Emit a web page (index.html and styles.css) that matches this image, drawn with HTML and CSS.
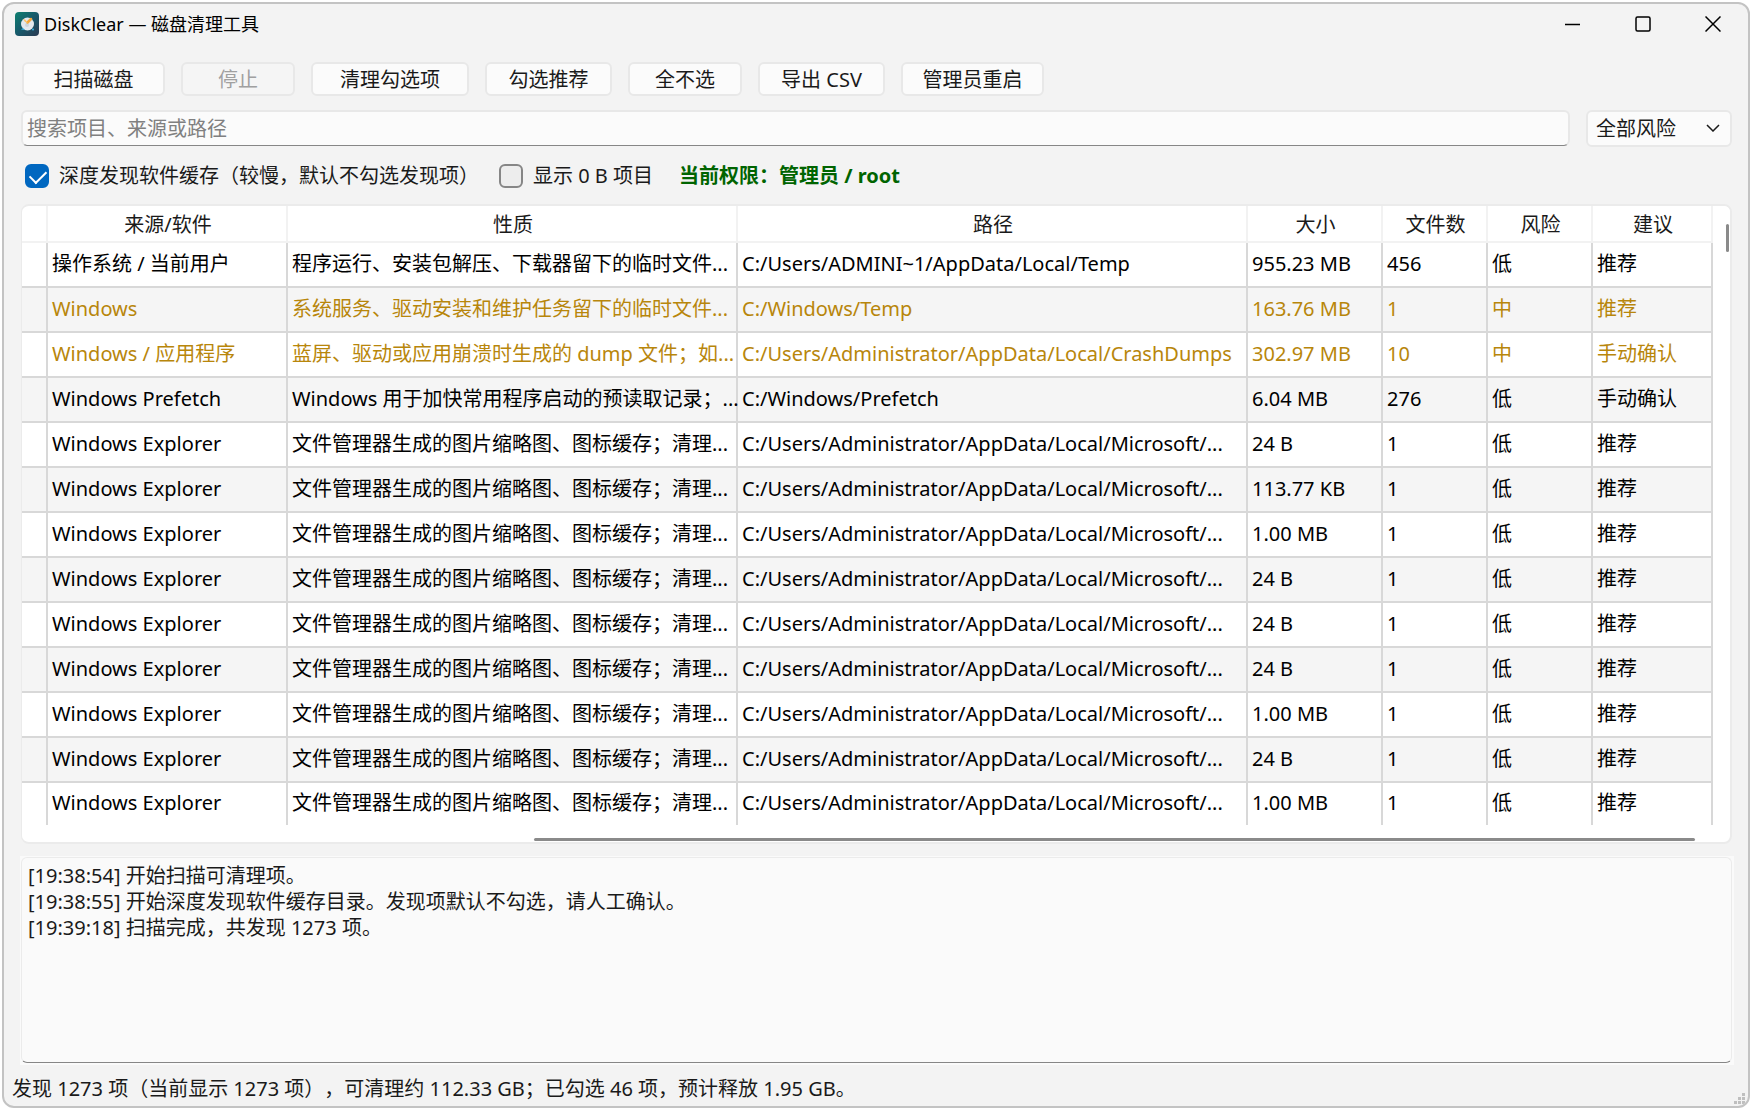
FILE: index.html
```html
<!DOCTYPE html>
<html lang="zh-CN">
<head>
  <meta charset="UTF-8" />
  <meta name="viewport" content="width=device-width, initial-scale=1" />
  <title>DiskClear — 磁盘清理工具</title>
  <link rel="stylesheet" href="styles.css">
</head>
<body>
  <div class="window">
    <div class="titlebar">
      <svg class="app-icon" viewBox="0 0 24 24" aria-hidden="true">
        <defs>
          <linearGradient id="iconBg" x1="0" y1="0" x2="1" y2="1">
            <stop offset="0" stop-color="#0d8070" />
            <stop offset="0.5" stop-color="#17596b" />
            <stop offset="1" stop-color="#2b3850" />
          </linearGradient>
        </defs>
        <rect width="24" height="24" rx="4" fill="url(#iconBg)" />
        <circle cx="12.500" cy="12" r="6.500" fill="#e3e8ee" />
        <circle cx="12" cy="13" r="2" fill="#cbd5df" />
        <path d="M16 7L12.500 10.500" stroke="#f5a83c" stroke-width="2.500" stroke-linecap="round" />
        <path d="M8 7L10 10L13 11L10 7.500Z" fill="#fbc46c" />
        <path d="M6 17.500L8 16L10 18Z" fill="#39b6e8" />
        <circle cx="18" cy="17.500" r="1" fill="#39b6e8" />
      </svg>
      <h1>DiskClear — 磁盘清理工具</h1>
      <div class="window-controls">
        <button type="button" aria-label="最小化">
          <svg viewBox="0 0 16 16"><path d="M0 8.500H15" /></svg>
        </button>
        <button type="button" aria-label="最大化">
          <svg viewBox="0 0 16 16"><rect x="1" y="1" width="14" height="14" rx="1.500" /></svg>
        </button>
        <button type="button" aria-label="关闭">
          <svg viewBox="0 0 16 16"><path d="M0.500 0.500L15.500 15.500M15.500 0.500L0.500 15.500" /></svg>
        </button>
      </div>
    </div>

    <main class="content">
      <div class="toolbar">
        <button type="button" class="btn btn-lg">扫描磁盘</button>
        <button type="button" class="btn" disabled>停止</button>
        <button type="button" class="btn btn-xl">清理勾选项</button>
        <button type="button" class="btn btn-md">勾选推荐</button>
        <button type="button" class="btn">全不选</button>
        <button type="button" class="btn btn-md">导出 CSV</button>
        <button type="button" class="btn btn-lg">管理员重启</button>
      </div>

      <div class="filters">
        <input type="text" class="search" placeholder="搜索项目、来源或路径" aria-label="搜索" />
        <div class="risk-select">
          <select aria-label="风险">
            <option>全部风险</option>
            <option>低</option>
            <option>中</option>
          </select>
          <svg viewBox="0 0 14 8" aria-hidden="true"><path d="M1 1L7 7L13 1" /></svg>
        </div>
      </div>

      <div class="options">
        <label><input type="checkbox" checked />深度发现软件缓存（较慢，默认不勾选发现项）</label>
        <label><input type="checkbox" />显示 0 B 项目</label>
        <strong class="permission">当前权限：管理员 / root</strong>
      </div>

      <div class="table-wrap">
        <table>
          <colgroup>
            <col class="c-check"><col class="c-source"><col class="c-kind"><col class="c-path"><col class="c-size"><col class="c-small"><col class="c-small"><col class="c-advice"><col>
          </colgroup>
          <thead>
            <tr><th></th><th>来源/软件</th><th>性质</th><th>路径</th><th>大小</th><th>文件数</th><th>风险</th><th>建议</th><th class="rest"></th></tr>
          </thead>
          <tbody>
            <tr><td></td><td>操作系统 / 当前用户</td><td>程序运行、安装包解压、下载器留下的临时文件...</td><td>C:/Users/ADMINI~1/AppData/Local/Temp</td><td>955.23 MB</td><td>456</td><td>低</td><td>推荐</td><td class="rest"></td></tr>
            <tr class="medium"><td></td><td>Windows</td><td>系统服务、驱动安装和维护任务留下的临时文件...</td><td>C:/Windows/Temp</td><td>163.76 MB</td><td>1</td><td>中</td><td>推荐</td><td class="rest"></td></tr>
            <tr class="medium"><td></td><td>Windows / 应用程序</td><td>蓝屏、驱动或应用崩溃时生成的 dump 文件；如...</td><td>C:/Users/Administrator/AppData/Local/CrashDumps</td><td>302.97 MB</td><td>10</td><td>中</td><td>手动确认</td><td class="rest"></td></tr>
            <tr><td></td><td>Windows Prefetch</td><td>Windows 用于加快常用程序启动的预读取记录；...</td><td>C:/Windows/Prefetch</td><td>6.04 MB</td><td>276</td><td>低</td><td>手动确认</td><td class="rest"></td></tr>
            <tr><td></td><td>Windows Explorer</td><td>文件管理器生成的图片缩略图、图标缓存；清理...</td><td>C:/Users/Administrator/AppData/Local/Microsoft/...</td><td>24 B</td><td>1</td><td>低</td><td>推荐</td><td class="rest"></td></tr>
            <tr><td></td><td>Windows Explorer</td><td>文件管理器生成的图片缩略图、图标缓存；清理...</td><td>C:/Users/Administrator/AppData/Local/Microsoft/...</td><td>113.77 KB</td><td>1</td><td>低</td><td>推荐</td><td class="rest"></td></tr>
            <tr><td></td><td>Windows Explorer</td><td>文件管理器生成的图片缩略图、图标缓存；清理...</td><td>C:/Users/Administrator/AppData/Local/Microsoft/...</td><td>1.00 MB</td><td>1</td><td>低</td><td>推荐</td><td class="rest"></td></tr>
            <tr><td></td><td>Windows Explorer</td><td>文件管理器生成的图片缩略图、图标缓存；清理...</td><td>C:/Users/Administrator/AppData/Local/Microsoft/...</td><td>24 B</td><td>1</td><td>低</td><td>推荐</td><td class="rest"></td></tr>
            <tr><td></td><td>Windows Explorer</td><td>文件管理器生成的图片缩略图、图标缓存；清理...</td><td>C:/Users/Administrator/AppData/Local/Microsoft/...</td><td>24 B</td><td>1</td><td>低</td><td>推荐</td><td class="rest"></td></tr>
            <tr><td></td><td>Windows Explorer</td><td>文件管理器生成的图片缩略图、图标缓存；清理...</td><td>C:/Users/Administrator/AppData/Local/Microsoft/...</td><td>24 B</td><td>1</td><td>低</td><td>推荐</td><td class="rest"></td></tr>
            <tr><td></td><td>Windows Explorer</td><td>文件管理器生成的图片缩略图、图标缓存；清理...</td><td>C:/Users/Administrator/AppData/Local/Microsoft/...</td><td>1.00 MB</td><td>1</td><td>低</td><td>推荐</td><td class="rest"></td></tr>
            <tr><td></td><td>Windows Explorer</td><td>文件管理器生成的图片缩略图、图标缓存；清理...</td><td>C:/Users/Administrator/AppData/Local/Microsoft/...</td><td>24 B</td><td>1</td><td>低</td><td>推荐</td><td class="rest"></td></tr>
            <tr><td></td><td>Windows Explorer</td><td>文件管理器生成的图片缩略图、图标缓存；清理...</td><td>C:/Users/Administrator/AppData/Local/Microsoft/...</td><td>1.00 MB</td><td>1</td><td>低</td><td>推荐</td><td class="rest"></td></tr>
          </tbody>
        </table>
        <div class="scroll-v"></div>
        <div class="scroll-h"></div>
      </div>

      <div class="log">
        <textarea readonly aria-label="日志">[19:38:54] 开始扫描可清理项。
[19:38:55] 开始深度发现软件缓存目录。发现项默认不勾选，请人工确认。
[19:39:18] 扫描完成，共发现 1273 项。</textarea>
      </div>
    </main>

    <footer class="statusbar">
      <span>发现 1273 项（当前显示 1273 项），可清理约 112.33 GB；已勾选 46 项，预计释放 1.95 GB。</span>
      <svg class="grip" viewBox="0 0 12 12" aria-hidden="true">
        <path d="M8 0h3v3h-3zM4 4h3v3h-3zM8 4h3v3h-3zM0 8h3v3h-3zM4 8h3v3h-3zM8 8h3v3h-3z" fill="#bfbfbf" />
      </svg>
    </footer>
  </div>
</body>
</html>
```

FILE: styles.css
```css
* {
  box-sizing: border-box;
}
body {
  margin: 0;
  padding: 2px;
  height: 100vh;
  background: #fff;
  color: #1a1a1a;
  font-family: "Noto Sans", "Noto Sans CJK SC", sans-serif;
  font-size: 20px;
  line-height: 26px;
  text-spacing-trim: space-all;
}
button, input, select, textarea {
  font: inherit;
  color: inherit;
}
.window {
  display: flex;
  flex-direction: column;
  height: 100%;
  background: #f3f3f3;
  border: 2px solid #c3c3c3;
  border-radius: 12px;
  overflow: hidden;
}

/* title bar */
.titlebar {
  display: flex;
  align-items: center;
  height: 40px;
  padding-left: 11px;
  color: #000;
}
.app-icon {
  width: 24px;
  height: 24px;
  margin-right: 5px;
}
.titlebar h1 {
  margin: 0;
  font-size: 18px;
  font-weight: normal;
}
.window-controls {
  display: flex;
  margin-left: auto;
}
.window-controls button {
  display: flex;
  align-items: center;
  justify-content: center;
  width: 70px;
  height: 40px;
  padding: 0;
  border: 0;
  background: none;
}
.window-controls svg {
  width: 16px;
  height: 16px;
  fill: none;
  stroke: #000;
  stroke-width: 1.5;
}

.content {
  flex: 1;
  display: flex;
  flex-direction: column;
  padding: 18px 16px 0 17px;
}

/* toolbar */
.toolbar {
  display: flex;
  gap: 16px;
  padding: 0 1px;
}
.btn {
  min-width: 114px;
  height: 34px;
  padding: 1px 0 0;
  border: 2px solid #e8e8e8;
  border-radius: 6px;
  background: #fbfbfb;
  line-height: 28px;
}
.btn:disabled {
  background: #f5f5f5;
  color: #a0a0a0;
}
.btn-md {
  min-width: 127px;
}
.btn-lg {
  min-width: 143px;
}
.btn-xl {
  min-width: 158px;
}

/* search and risk filter */
.filters {
  display: flex;
  gap: 16px;
  margin-top: 14px;
}
.search {
  flex: 1;
  height: 36px;
  padding: 0 4px;
  border: 2px solid #e8e8e8;
  border-bottom: 1px solid #868686;
  border-radius: 6px;
  background: #fbfbfb;
}
.search::placeholder {
  color: #808080;
}
.risk-select {
  position: relative;
  width: 146px;
}
.risk-select select {
  width: 100%;
  height: 37px;
  padding: 0 8px;
  border: 2px solid #e8e8e8;
  border-radius: 6px;
  background: #fbfbfb;
  appearance: none;
}
.risk-select svg {
  position: absolute;
  top: 14px;
  right: 12px;
  width: 14px;
  height: 8px;
  fill: none;
  stroke: #1a1a1a;
  stroke-width: 1.5;
  pointer-events: none;
}

/* options row */
.options {
  display: flex;
  align-items: center;
  margin: 16px 4px 15px;
}
.options label {
  display: flex;
  align-items: center;
  gap: 10px;
  margin-right: 20px;
}
.options input {
  position: relative;
  width: 24px;
  height: 24px;
  margin: 0;
  border: 2px solid #868686;
  border-radius: 6px;
  background: #ededed;
  appearance: none;
}
.options input:checked {
  border-color: #0067c0;
  background: #0067c0;
}
.options input:checked::after {
  content: "";
  position: absolute;
  left: 3px;
  top: 4px;
  width: 14px;
  height: 8px;
  border-left: 2px solid #fff;
  border-bottom: 2px solid #fff;
  transform: rotate(-45deg);
}
.permission {
  margin-left: 6px;
  color: #006400;
}

/* results table */
.table-wrap {
  position: relative;
  padding-bottom: 17px;
  border: 2px solid #ebebeb;
  border-left-width: 1px;
  border-radius: 8px;
  background: #fff;
  overflow: hidden;
}
table {
  width: 100%;
  table-layout: fixed;
  border-collapse: separate;
  border-spacing: 0;
  color: #000;
}
.c-check {
  width: 26px;
}
.c-source {
  width: 240px;
}
.c-kind {
  width: 450px;
}
.c-path {
  width: 510px;
}
.c-size {
  width: 135px;
}
.c-small {
  width: 105px;
}
.c-advice {
  width: 120px;
}
th {
  height: 37px;
  padding: 2px 0 0 2px;
  border-right: 2px solid #f2f2f2;
  border-bottom: 2px solid #f2f2f2;
  color: #1a1a1a;
  font-weight: normal;
}
td {
  height: 45px;
  padding: 0 0 2px 4px;
  border-right: 2px solid #d8d8d8;
  border-bottom: 2px solid #d8d8d8;
  white-space: nowrap;
}
tbody tr:nth-child(even) td {
  background: #f5f5f5;
}
tbody tr:last-child td {
  height: 42px;
  border-bottom: 0;
}
tbody .medium {
  color: #b8860b;
}
th.rest, tbody tr td.rest {
  padding: 0;
  border: 0;
  background: #fff;
}
.scroll-v {
  position: absolute;
  top: 18px;
  right: 1px;
  width: 3px;
  height: 28px;
  border-radius: 2px;
  background: #8a8a8a;
}
.scroll-h {
  position: absolute;
  bottom: 1px;
  left: 30%;
  right: 35px;
  height: 3px;
  border-radius: 2px;
  background: #8a8a8a;
}

/* log */
.log {
  flex: 1;
  display: flex;
  margin: 12px -2px 0 -1px;
  padding: 1px 2px 2px 1px;
  background: #fafafa;
}
.log textarea {
  flex: 1;
  padding: 5px 6px;
  border: 1px solid #ebebeb;
  border-bottom-color: #868686;
  border-radius: 6px;
  background: #fafafa;
  outline: none;
  resize: none;
}

.statusbar {
  display: flex;
  justify-content: space-between;
  align-items: center;
  height: 41px;
  padding: 8px 2px 1px 8px;
}
.grip {
  align-self: flex-end;
  width: 12px;
  height: 12px;
}
```
